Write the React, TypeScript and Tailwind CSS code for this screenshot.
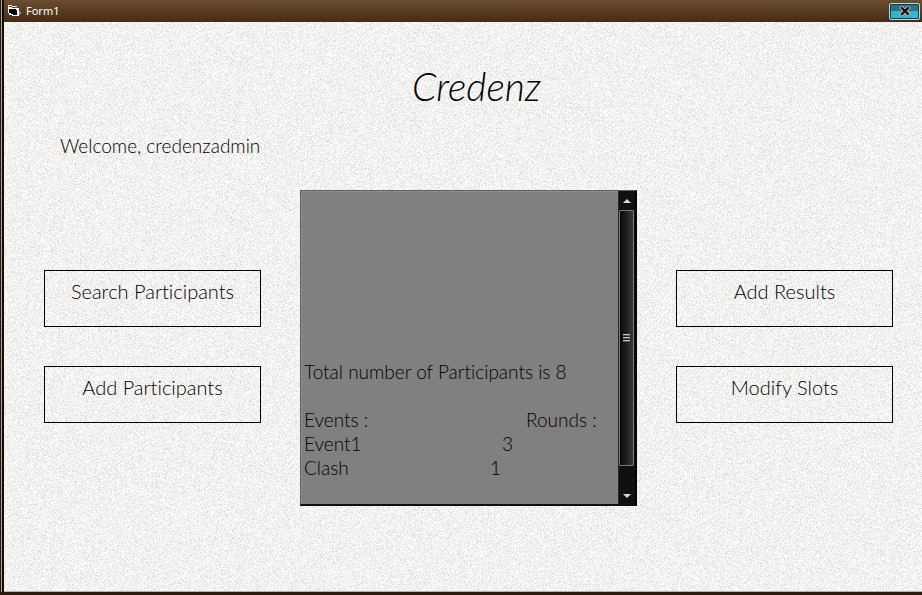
import React from "react";

const events = [
  { name: "Event1", rounds: 3, indent: "pl-3" },
  { name: "Clash", rounds: 1, indent: "pl-0" },
];

function PaperTexture() {
  return (
    <svg className="absolute inset-0 h-full w-full" aria-hidden="true">
      <filter id="grain" x="0" y="0" width="100%" height="100%" colorInterpolationFilters="sRGB">
        <feTurbulence type="fractalNoise" baseFrequency="1.37 1.61" numOctaves="3" seed="4" />
        <feColorMatrix values="0.34 0 0 0 0.785  0.34 0 0 0 0.782  0.34 0 0 0 0.774  0 0 0 0 1" />
      </filter>
      <rect width="100%" height="100%" filter="url(#grain)" />
    </svg>
  );
}

function TitleBar() {
  return (
    <header className="flex h-[22px] items-center bg-linear-to-b from-[#6b4d30] to-[#452c15] pr-[2px] pl-1">
      <svg width="14" height="14" viewBox="0 0 14 14" aria-hidden="true" shapeRendering="crispEdges">
        <path d="M0 1h4v1h5v2h2v8H4v-1H1V9H0z" fill="#fff" />
        <path d="M1 2h3v1h5v1H4V3H1z" fill="#e01010" />
        <path d="M1 5h1v4h-1z" fill="#111" />
        <path d="M2 5h6v1h1v5H5v-1H3V9H2z" fill="#000" />
        <path d="M11 7h1v1h1v2h-1v1h-1z" fill="#8b8b8b" />
      </svg>
      <h2 className="ml-1 flex-1 font-['Noto_Sans',sans-serif] text-[11px] leading-4 font-normal text-white">Form1</h2>
      <button
        type="button"
        aria-label="Close"
        className="flex h-[17px] w-[31px] items-center justify-center rounded-[2px] border border-[#a9e0d8] bg-linear-to-b from-[#2d7282] from-50% to-[#35b4cf] to-50% shadow-[inset_0_0_0_1px_#123c48]"
      >
        <svg width="12" height="10" viewBox="0 0 12 10" aria-hidden="true">
          <path d="M3 2l6 6M9 2l-6 6" stroke="#b9aaa2" strokeWidth="4" strokeLinecap="square" />
          <path d="M3 2l6 6M9 2l-6 6" stroke="#0b0b10" strokeWidth="2" strokeLinecap="square" />
        </svg>
      </button>
    </header>
  );
}

function MenuButton({ children }: { children: React.ReactNode }) {
  return (
    <button
      type="button"
      className="flex h-[57px] w-full items-start justify-center border border-black pt-2 text-[20px] leading-6"
    >
      {children}
    </button>
  );
}

function ScrollBar() {
  return (
    <div className="flex w-[17px] flex-col border-l border-[#2a2a2a] bg-[#101010]" aria-hidden="true">
      <div className="flex h-[19px] items-center justify-center">
        <svg width="8" height="4" viewBox="0 0 8 4"><path d="M4 0l4 4H0z" fill="#d8d8d8" /></svg>
      </div>
      <div className="mr-px flex flex-1 items-center justify-center rounded-[1px] border border-[#777] bg-linear-to-r from-[#080808] to-[#3a3a34]">
        <div className="flex flex-col gap-px">
          <i className="h-[2px] w-[7px] border-t border-[#c4c4c4] bg-[#555]" />
          <i className="h-[2px] w-[7px] border-t border-[#c4c4c4] bg-[#555]" />
          <i className="h-[2px] w-[7px] border-t border-[#c4c4c4] bg-[#555]" />
        </div>
      </div>
      <div className="flex h-[38px] items-end justify-center pb-[6px]">
        <svg width="8" height="4" viewBox="0 0 8 4"><path d="M0 0h8L4 4z" fill="#d8d8d8" /></svg>
      </div>
    </div>
  );
}

function Summary() {
  return (
    <section className="flex h-[316px] border-t border-r-2 border-b-2 border-l border-t-[#5f5f5f] border-r-[#050505] border-b-[#101010] border-l-[#5f5f5f] bg-[#808080]">
      <div className="flex flex-1 flex-col justify-end border-t border-l border-[#8e8e8e] pb-6 pl-[2px] leading-6">
        <p>Total number of Participants is 8</p>
        <table className="mt-6 w-full table-fixed text-left">
          <thead>
            <tr>
              <th className="w-[186px] p-0 font-light">Events :</th>
              <th className="p-0 pl-9 font-light">Rounds :</th>
            </tr>
          </thead>
          <tbody>
            {events.map((e) => (
              <tr key={e.name}>
                <td className="p-0">{e.name}</td>
                <td className={e.indent}>{e.rounds}</td>
              </tr>
            ))}
          </tbody>
        </table>
      </div>
      <ScrollBar />
    </section>
  );
}

export default function App() {
  return (
    <div className="flex min-h-screen flex-col border-b-[3px] border-l border-[#2a1b0e] bg-[#a8a39c] pl-px font-['Lato',sans-serif] text-[19px] font-light text-black [font-variant-ligatures:none]">
      <div className="flex flex-1 flex-col border-l-2 border-[#150d08]">
        <TitleBar />
        <main className="relative flex-1 border-b border-[#b5b2ae] bg-[#f5f4f2]">
          <PaperTexture />
          <div className="relative pt-10 pr-[29px] pl-10">
            <h1 className="pl-4 text-center text-[39px] leading-[48px] font-light italic">Credenz</h1>
            <p className="mt-6 pl-4 leading-6">Welcome, credenzadmin</p>
            <div className="mt-8 grid grid-cols-[217fr_337fr_217fr] gap-[39px]">
              <nav className="flex flex-col gap-[39px] pt-20" aria-label="Participants">
                <MenuButton>Search Participants</MenuButton>
                <MenuButton>Add Participants</MenuButton>
              </nav>
              <Summary />
              <nav className="flex flex-col gap-[39px] pt-20" aria-label="Results">
                <MenuButton>Add Results</MenuButton>
                <MenuButton>Modify Slots</MenuButton>
              </nav>
            </div>
          </div>
        </main>
      </div>
    </div>
  );
}
